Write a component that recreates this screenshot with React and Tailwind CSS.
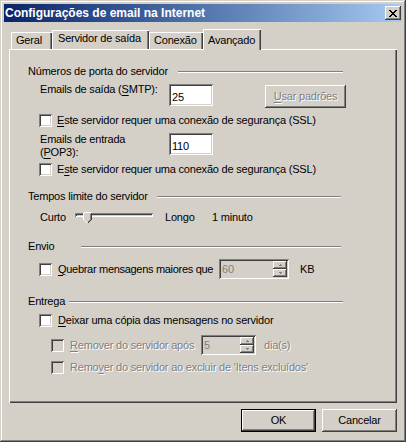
import React from "react";

const RAISED =
  "shadow-[inset_-1px_-1px_0_#404040,inset_1px_1px_0_#ffffff,inset_-2px_-2px_0_#808080,inset_2px_2px_0_#d4d0c8]";
const SUNKEN =
  "shadow-[inset_1px_1px_0_#808080,inset_-1px_-1px_0_#ffffff,inset_2px_2px_0_#404040,inset_-2px_-2px_0_#d4d0c8]";
const PANEL =
  "shadow-[inset_1px_1px_0_#ffffff,inset_-1px_-1px_0_#404040,inset_-2px_-2px_0_#808080]";
const TAB =
  "shadow-[inset_1px_1px_0_#ffffff,inset_-1px_0_0_#404040,inset_-2px_0_0_#808080]";
const DIS = "text-[#808080] [text-shadow:1px_1px_0_#ffffff]";

function U({ children }) {
  return <span className="underline decoration-1 underline-offset-[2px]">{children}</span>;
}

function Check({ disabled }) {
  return (
    <div
      className={`w-[13px] h-[13px] shrink-0 ${SUNKEN} ${
        disabled ? "bg-[#d4d0c8]" : "bg-white"
      }`}
    />
  );
}

function Group({ label, labelCls, lineCls, className }) {
  return (
    <div className={`flex items-center h-[13px] ${className}`}>
      <div className={`${labelCls} whitespace-nowrap shrink-0`}>{label}</div>
      <div className={`${lineCls} h-[2px] bg-white shadow-[inset_0_1px_0_#808080]`} />
    </div>
  );
}

function Arrow({ up, color }) {
  return (
    <svg width="3" height="2" viewBox="0 0 3 2" shapeRendering="crispEdges">
      <path d={up ? "M1 0h1v1h1v1H0V1h1z" : "M0 0h3v1H2v1H1V1H0z"} fill={color} />
    </svg>
  );
}

function Spin({ disabled }) {
  const c = disabled ? "#808080" : "#000000";
  return (
    <div className="flex flex-col w-[14px] h-[16px] shrink-0">
      <div className={`h-[8px] flex items-center justify-center bg-[#d4d0c8] ${RAISED}`}>
        <Arrow up color={c} />
      </div>
      <div className={`h-[8px] flex items-center justify-center bg-[#d4d0c8] ${RAISED}`}>
        <Arrow color={c} />
      </div>
    </div>
  );
}

function CloseGlyph() {
  const rows = [
    [[0, 2], [6, 2]],
    [[1, 2], [5, 2]],
    [[2, 4]],
    [[3, 2]],
    [[2, 4]],
    [[1, 2], [5, 2]],
    [[0, 2], [6, 2]],
  ];
  return (
    <svg width="8" height="7" viewBox="0 0 8 7" shapeRendering="crispEdges">
      {rows.map((r, y) =>
        r.map(([x, w], i) => <rect key={y + "-" + i} x={x} y={y} width={w} height="1" fill="#000" />)
      )}
    </svg>
  );
}

export default function App() {
  return (
    <div className="w-[406px] h-[442px] bg-[#d4d0c8] p-[4px] flex flex-col font-['Liberation_Sans',Arial,sans-serif] text-[11px] leading-[13px] text-black tracking-[-0.2px] shadow-[inset_-1px_-1px_0_#404040,inset_1px_1px_0_#d4d0c8,inset_-2px_-2px_0_#808080,inset_2px_2px_0_#ffffff]">
      {/* Title bar */}
      <div className="h-[18px] shrink-0 flex items-center justify-between pl-[1px] pr-[1px] bg-linear-to-r from-[#0a246a] to-[#a6caf0]">
        <div className="text-white font-bold text-[12px] tracking-normal whitespace-nowrap">
          Configurações de email na Internet
        </div>
        <div className={`w-[16px] h-[14px] flex items-center justify-center bg-[#d4d0c8] ${RAISED}`}>
          <CloseGlyph />
        </div>
      </div>

      <div className="flex flex-col px-[5px] pt-[6px]">
        {/* Tabs */}
        <div className="flex items-end h-[21px] pl-[2px]">
          <div className={`w-[41px] h-[17px] pt-[2px] pl-[5px] whitespace-nowrap ${TAB}`}>Geral</div>
          <div className={`w-[97px] h-[19px] pt-[2px] pl-[6px] whitespace-nowrap ${TAB}`}>Servidor de saída</div>
          <div className={`w-[54px] h-[17px] pt-[2px] pl-[5px] whitespace-nowrap ${TAB}`}>Conexão</div>
          <div className={`w-[58px] h-[21px] pt-[5px] pl-[5px] -mb-px relative z-10 bg-[#d4d0c8] whitespace-nowrap ${TAB}`}>
            Avançado
          </div>
        </div>

        {/* Panel */}
        <div className={`h-[354px] flex flex-col pl-[19px] ${PANEL}`}>
          <Group
            className="mt-[16px]"
            label="Números de porta do servidor"
            labelCls="w-[150px]"
            lineCls="w-[165px]"
          />

          <div className="flex items-start mt-[6px] h-[24px] pl-[12px]">
            <div className="w-[129px] -mt-px whitespace-nowrap">
              Emails de saída (<U>S</U>MTP):
            </div>
            <div className={`w-[44px] h-[22px] pl-[3px] pt-[7px] bg-white ${SUNKEN}`}>25</div>
            <div
              className={`ml-[52px] mt-[1px] w-[81px] h-[23px] flex items-center justify-center whitespace-nowrap ${RAISED} ${DIS}`}
            >
              <U>U</U>sar padrões
            </div>
          </div>

          <div className="flex items-center mt-[6px] h-[13px] pl-[11px]">
            <Check />
            <div className="ml-[5px] whitespace-nowrap">
              <U>E</U>ste servidor requer uma conexão de segurança (SSL)
            </div>
          </div>

          <div className="flex items-start mt-[6px] h-[26px] pl-[12px]">
            <div className="w-[129px]">
              Emails de entrada
              <br />
              (<U>P</U>OP3):
            </div>
            <div className={`w-[44px] h-[22px] pl-[3px] pt-[7px] bg-white ${SUNKEN}`}>110</div>
          </div>

          <div className="flex items-center mt-[4px] h-[13px] pl-[11px]">
            <Check />
            <div className="ml-[5px] whitespace-nowrap">
              E<U>s</U>te servidor requer uma conexão de segurança (SSL)
            </div>
          </div>

          <Group
            className="mt-[14px]"
            label="Tempos limite do servidor"
            labelCls="w-[129px]"
            lineCls="w-[184px]"
          />

          <div className="flex items-center mt-[8px] h-[13px] pl-[12px]">
            <div className="w-[35px]">Curto</div>
            <div className="w-[78px] h-[12px] relative self-start">
              <div className={`mt-[2px] h-[4px] bg-[#d4d0c8] ${SUNKEN}`} />
              <svg
                className="absolute left-[8px] top-[1px]"
                width="9"
                height="11"
                viewBox="0 0 9 11"
                shapeRendering="crispEdges"
              >
                <path d="M0 0H9V7L4.5 11L0 7Z" fill="#d4d0c8" />
                <path d="M0 0H8M0 0V7M0 7L4 11" stroke="#ffffff" strokeWidth="1" fill="none" transform="translate(0.5 0.5)" />
                <path d="M8 0V7L4 11" stroke="#404040" strokeWidth="1" fill="none" transform="translate(0.5 0.5)" />
                <path d="M7 1V7L4 10" stroke="#808080" strokeWidth="1" fill="none" transform="translate(0.5 0.5)" />
              </svg>
            </div>
            <div className="ml-[12px] w-[47px]">Longo</div>
            <div>1 minuto</div>
          </div>

          <Group className="mt-[16px]" label="Envio" labelCls="w-[53px]" lineCls="w-[260px]" />

          <div className="flex items-center mt-[6px] h-[20px] pl-[11px]">
            <Check />
            <div className="ml-[6px] w-[161px] whitespace-nowrap tracking-[-0.3px]">
              <U>Q</U>uebrar mensagens maiores que
            </div>
            <div
              className={`w-[70px] h-[20px] flex items-center justify-between pl-[3px] pr-[2px] bg-[#d4d0c8] ${SUNKEN}`}
            >
              <span className="text-[#808080]">60</span>
              <Spin disabled />
            </div>
            <div className="ml-[11px]">KB</div>
          </div>

          <Group className="mt-[16px]" label="Entrega" labelCls="w-[41px]" lineCls="w-[274px]" />

          <div className="flex items-center mt-[6px] h-[13px] pl-[11px]">
            <Check />
            <div className="ml-[6px] whitespace-nowrap">
              <U>D</U>eixar uma cópia das mensagens no servidor
            </div>
          </div>

          <div className="flex items-center mt-[8px] h-[20px] pl-[23px]">
            <Check disabled />
            <div className={`ml-[6px] w-[131px] whitespace-nowrap ${DIS}`}>
              <U>R</U>emover do servidor após
            </div>
            <div
              className={`w-[55px] h-[20px] flex items-center justify-between pl-[3px] pr-[2px] bg-[#d4d0c8] ${SUNKEN}`}
            >
              <span className="text-[#808080]">5</span>
              <Spin disabled />
            </div>
            <div className={`ml-[8px] ${DIS}`}>dia(s)</div>
          </div>

          <div className="flex items-center mt-[6px] h-[13px] pl-[23px]">
            <Check disabled />
            <div className={`ml-[6px] whitespace-nowrap ${DIS}`}>
              Remo<U>v</U>er do servidor ao excluir de 'Itens excluídos'
            </div>
          </div>
        </div>

        {/* Buttons */}
        <div className="flex justify-end gap-[6px] mt-[6px]">
          <div
            className="w-[75px] h-[23px] flex items-center justify-center shadow-[inset_0_0_0_1px_#000000,inset_-2px_-2px_0_#404040,inset_2px_2px_0_#ffffff,inset_-3px_-3px_0_#808080]"
          >
            OK
          </div>
          <div className={`w-[75px] h-[23px] flex items-center justify-center ${RAISED}`}>Cancelar</div>
        </div>
      </div>
    </div>
  );
}
